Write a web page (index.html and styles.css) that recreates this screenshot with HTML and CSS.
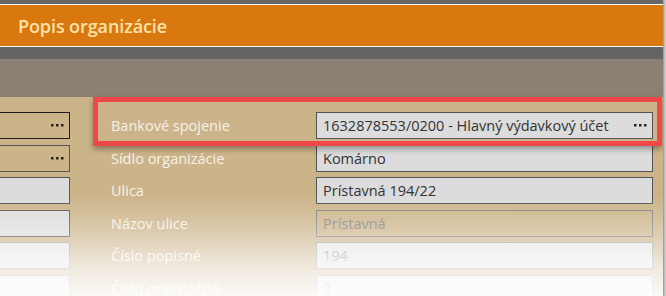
FILE: index.html
```html
<!DOCTYPE html>
<html lang="sk">
<head>
    <meta charset="UTF-8">
    <meta name="viewport" content="width=device-width, initial-scale=1.0">
    <title>Popis organizácie</title>
    <link rel="stylesheet" href="styles.css">
</head>
<body>

    <div class="window">
        <div class="top-strip"></div>
        <header class="title-bar">
            <h1>Popis organizácie</h1>
        </header>
        <div class="sub-strip"></div>
        <div class="toolbar"></div>

        <div class="panel">
            <div class="form">
                <!-- row 1 -->
                <div class="field field-lookup field-dark"><span class="dots"><svg width="13" height="3" viewBox="0 0 13 3"><rect x="0" y="0" width="2.5" height="2.5"/><rect x="5" y="0" width="2.5" height="2.5"/><rect x="10" y="0" width="2.5" height="2.5"/></svg></span></div>
                <label class="label">Bankové spojenie</label>
                <div class="field field-filled">
                    <span class="value">1632878553/0200 - Hlavný výdavkový účet</span>
                    <span class="dots"><svg width="13" height="3" viewBox="0 0 13 3"><rect x="0" y="0" width="2.5" height="2.5"/><rect x="5" y="0" width="2.5" height="2.5"/><rect x="10" y="0" width="2.5" height="2.5"/></svg></span>
                </div>

                <!-- row 2 -->
                <div class="field field-lookup"><span class="dots"><svg width="13" height="3" viewBox="0 0 13 3"><rect x="0" y="0" width="2.5" height="2.5"/><rect x="5" y="0" width="2.5" height="2.5"/><rect x="10" y="0" width="2.5" height="2.5"/></svg></span></div>
                <label class="label">Sídlo organizácie</label>
                <div class="field field-filled"><span class="value">Komárno</span></div>

                <!-- row 3 -->
                <div class="field field-filled"></div>
                <label class="label">Ulica</label>
                <div class="field field-filled"><span class="value">Prístavná 194/22</span></div>

                <!-- row 4 -->
                <div class="field field-filled"></div>
                <label class="label">Názov ulice</label>
                <div class="field field-readonly"><span class="value">Prístavná</span></div>

                <!-- row 5 -->
                <div class="field field-disabled"></div>
                <label class="label">Číslo popisné</label>
                <div class="field field-disabled"><span class="value">194</span></div>

                <!-- row 6 -->
                <div class="field field-disabled"></div>
                <label class="label">Číslo orientačné</label>
                <div class="field field-disabled"><span class="value">2</span></div>
            </div>

            <div class="highlight"></div>
        </div>

        <div class="fade"></div>
    </div>

</body>
</html>
```

FILE: styles.css
```css
body {
    margin: 0;
    padding: 0;
    background-color: #d2d2d2;
    font-family: "Open Sans", "Noto Sans", sans-serif;
    overflow: hidden;
}

.window {
    position: relative;
    width: 663px;
    height: 296px;
    overflow: hidden;
    box-shadow: 1px 0 2px rgba(0, 0, 0, 0.35);
}

.top-strip {
    height: 4px;
    background-color: #666666;
}

.title-bar {
    height: 41px;
    background-color: #d9780f;
    border-top: 1px solid #ffffff;
    border-bottom: 1px solid #ffffff;
    display: flex;
    align-items: center;
    padding-left: 18px;
}

.title-bar h1 {
    margin: 0;
    font-size: 18px;
    font-weight: 600;
    color: #fde3aa;
    letter-spacing: -0.1px;
}

.sub-strip {
    height: 12px;
    background-color: #646464;
}

.toolbar {
    height: 38px;
    background-color: #8b8073;
}

.panel {
    position: relative;
    height: 200px;
    background-color: #ccb48a;
    padding-top: 15px;
}

.form {
    display: grid;
    grid-template-columns: 70px 246px 337px;
    grid-auto-rows: 27px;
    row-gap: 5.5px;
}

.label {
    padding-left: 41px;
    display: flex;
    align-items: center;
    font-size: 14.5px;
    color: #f6f1e7;
}

.field {
    box-sizing: border-box;
    display: flex;
    align-items: center;
    justify-content: space-between;
    padding: 0 5px 0 6px;
    font-size: 14.5px;
    border: 1px solid #555555;
    color: #333333;
}

.form > .field:nth-child(3n+1) {
    border-left: 0;
}

.field-lookup {
    background-color: transparent;
    justify-content: flex-end;
}

.field-dark {
    border-color: #1e1e1e;
}

.field-filled {
    background-color: #dcdcdc;
}

.field-readonly {
    background-color: transparent;
    border-color: #808080;
    color: #808080;
}

.field-disabled {
    background-color: #e4e4e4;
    border-color: #9a9a9a;
    color: #9a9a9a;
}

.dots {
    display: flex;
    align-items: center;
}

.dots svg {
    fill: #222222;
}

.value {
    white-space: nowrap;
}

/* red frame round the bank row */
.highlight {
    position: absolute;
    left: 93px;
    top: 0;
    width: 559px;
    height: 39px;
    border: 5px solid #f04848;
    box-shadow: 0 3px 6px rgba(0, 0, 0, 0.35);
}

/* bottom part fades out to white */
.fade {
    position: absolute;
    left: 0;
    right: 0;
    top: 196px;
    bottom: 0;
    background: linear-gradient(to bottom, rgba(255, 255, 255, 0) 0%, rgba(255, 255, 255, 0.3) 35%, rgba(255, 255, 255, 0.7) 70%, rgba(255, 255, 255, 0.93) 100%);
    pointer-events: none;
}
```
